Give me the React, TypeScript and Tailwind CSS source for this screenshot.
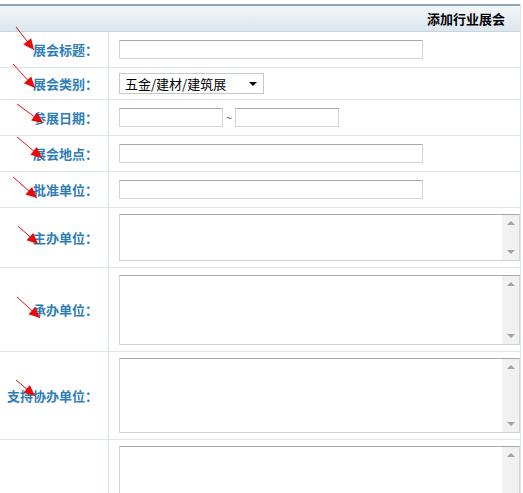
import React from "react";

const labelFont = { fontFamily: '"Noto Sans CJK SC", "Noto Sans", sans-serif' };

interface Arrow {
  x1: number;
  y1: number;
  x2: number;
  y2: number;
}

// 红色标注箭头（起点 → 箭头尖）
const arrows: Arrow[] = [
  { x1: 16, y1: 27, x2: 34, y2: 50 },
  { x1: 13, y1: 64, x2: 35, y2: 88 },
  { x1: 17, y1: 104, x2: 43, y2: 123 },
  { x1: 17, y1: 137, x2: 42, y2: 158 },
  { x1: 13, y1: 177, x2: 37, y2: 198 },
  { x1: 18, y1: 226, x2: 38, y2: 244 },
  { x1: 17, y1: 297, x2: 40, y2: 318 },
  { x1: 16, y1: 380, x2: 35, y2: 396 },
];

function arrowHead(a: Arrow) {
  const dx = a.x2 - a.x1;
  const dy = a.y2 - a.y1;
  const len = Math.sqrt(dx * dx + dy * dy);
  const ux = dx / len;
  const uy = dy / len;
  const bx = a.x2 - ux * 11;
  const by = a.y2 - uy * 11;
  const px = -uy * 5;
  const py = ux * 5;
  return `${a.x2},${a.y2} ${bx + px},${by + py} ${bx - px},${by - py}`;
}

function TextBox({ w }: { w: string }) {
  return (
    <input
      type="text"
      className={`${w} h-[19px] border border-[#d4d4d4] border-t-[#a8a8a8] bg-white outline-none`}
    />
  );
}

function ScrollArea({ h }: { h: string }) {
  return (
    <div className={`flex ${h} w-[401px] border border-[#d4d4d4] border-t-[#a8a8a8] bg-white`}>
      <textarea className="flex-1 resize-none outline-none" />
      <div className="flex w-[17px] flex-col justify-between bg-[#f1f1f1] py-[6px] items-center">
        <span className="block w-0 h-0 border-x-[4px] border-x-transparent border-b-[4px] border-b-[#a3a3a3]" />
        <span className="block w-0 h-0 border-x-[4px] border-x-transparent border-t-[4px] border-t-[#a3a3a3]" />
      </div>
    </div>
  );
}

function Row({
  label,
  h,
  children,
}: {
  label?: string;
  h: string;
  children: React.ReactNode;
}) {
  return (
    <div className={`flex ${h} border-b border-[#dbe6ec]`}>
      <div
        className="flex w-[109px] shrink-0 items-center justify-end border-r border-[#d5e2ea] pr-[10px] text-[13px] font-bold text-[#2f7db6]"
        style={labelFont}
      >
        {label}
      </div>
      <div className="flex flex-1 items-center pl-[10px]">{children}</div>
    </div>
  );
}

export default function App() {
  return (
    <div className="relative h-[493px] w-[523px] overflow-hidden bg-white" style={labelFont}>
      <div className="mt-[4px] w-[521px] border-r border-[#dbe6ec]">
        <div className="flex h-[28px] items-center justify-end border-t-2 border-b border-t-[#8ea3b3] border-b-[#c6d4de] bg-gradient-to-b from-[#f3f6f9] to-[#dce6ed] pr-[15px]">
          <span className="text-[13px] font-bold text-black">添加行业展会</span>
        </div>

        <Row label="展会标题：" h="h-[36px]">
          <TextBox w="w-[304px]" />
        </Row>
        <Row label="展会类别：" h="h-[32px]">
          <div className="relative flex h-[21px] w-[145px] items-center border border-[#c8c8c8] bg-white pl-[5px] text-[13px] text-black">
            五金/建材/建筑展
            <span className="absolute right-[6px] top-[8px] block w-0 h-0 border-x-[4px] border-x-transparent border-t-[4px] border-t-black" />
          </div>
        </Row>
        <Row label="参展日期：" h="h-[36px]">
          <TextBox w="w-[104px]" />
          <span className="mx-[3px] text-[11px] text-[#555]">~</span>
          <TextBox w="w-[104px]" />
        </Row>
        <Row label="展会地点：" h="h-[36px]">
          <TextBox w="w-[304px]" />
        </Row>
        <Row label="批准单位：" h="h-[36px]">
          <TextBox w="w-[304px]" />
        </Row>
        <Row label="主办单位：" h="h-[60px]">
          <ScrollArea h="h-[47px]" />
        </Row>
        <Row label="承办单位：" h="h-[84px]">
          <ScrollArea h="h-[70px]" />
        </Row>
        <Row label="支持协办单位：" h="h-[88px]">
          <ScrollArea h="h-[75px]" />
        </Row>
        <div className="flex h-[60px]">
          <div className="w-[109px] shrink-0 border-r border-[#d5e2ea]" />
          <div className="flex-1 pl-[10px] pt-[6px]">
            <ScrollArea h="h-[60px]" />
          </div>
        </div>
      </div>

      <svg className="pointer-events-none absolute left-0 top-0" width="523" height="493">
        {arrows.map((a, i) => (
          <g key={i}>
            <line x1={a.x1} y1={a.y1} x2={a.x2} y2={a.y2} stroke="#e01010" strokeWidth="1" />
            <polygon points={arrowHead(a)} fill="#e80a0a" />
          </g>
        ))}
      </svg>
    </div>
  );
}
